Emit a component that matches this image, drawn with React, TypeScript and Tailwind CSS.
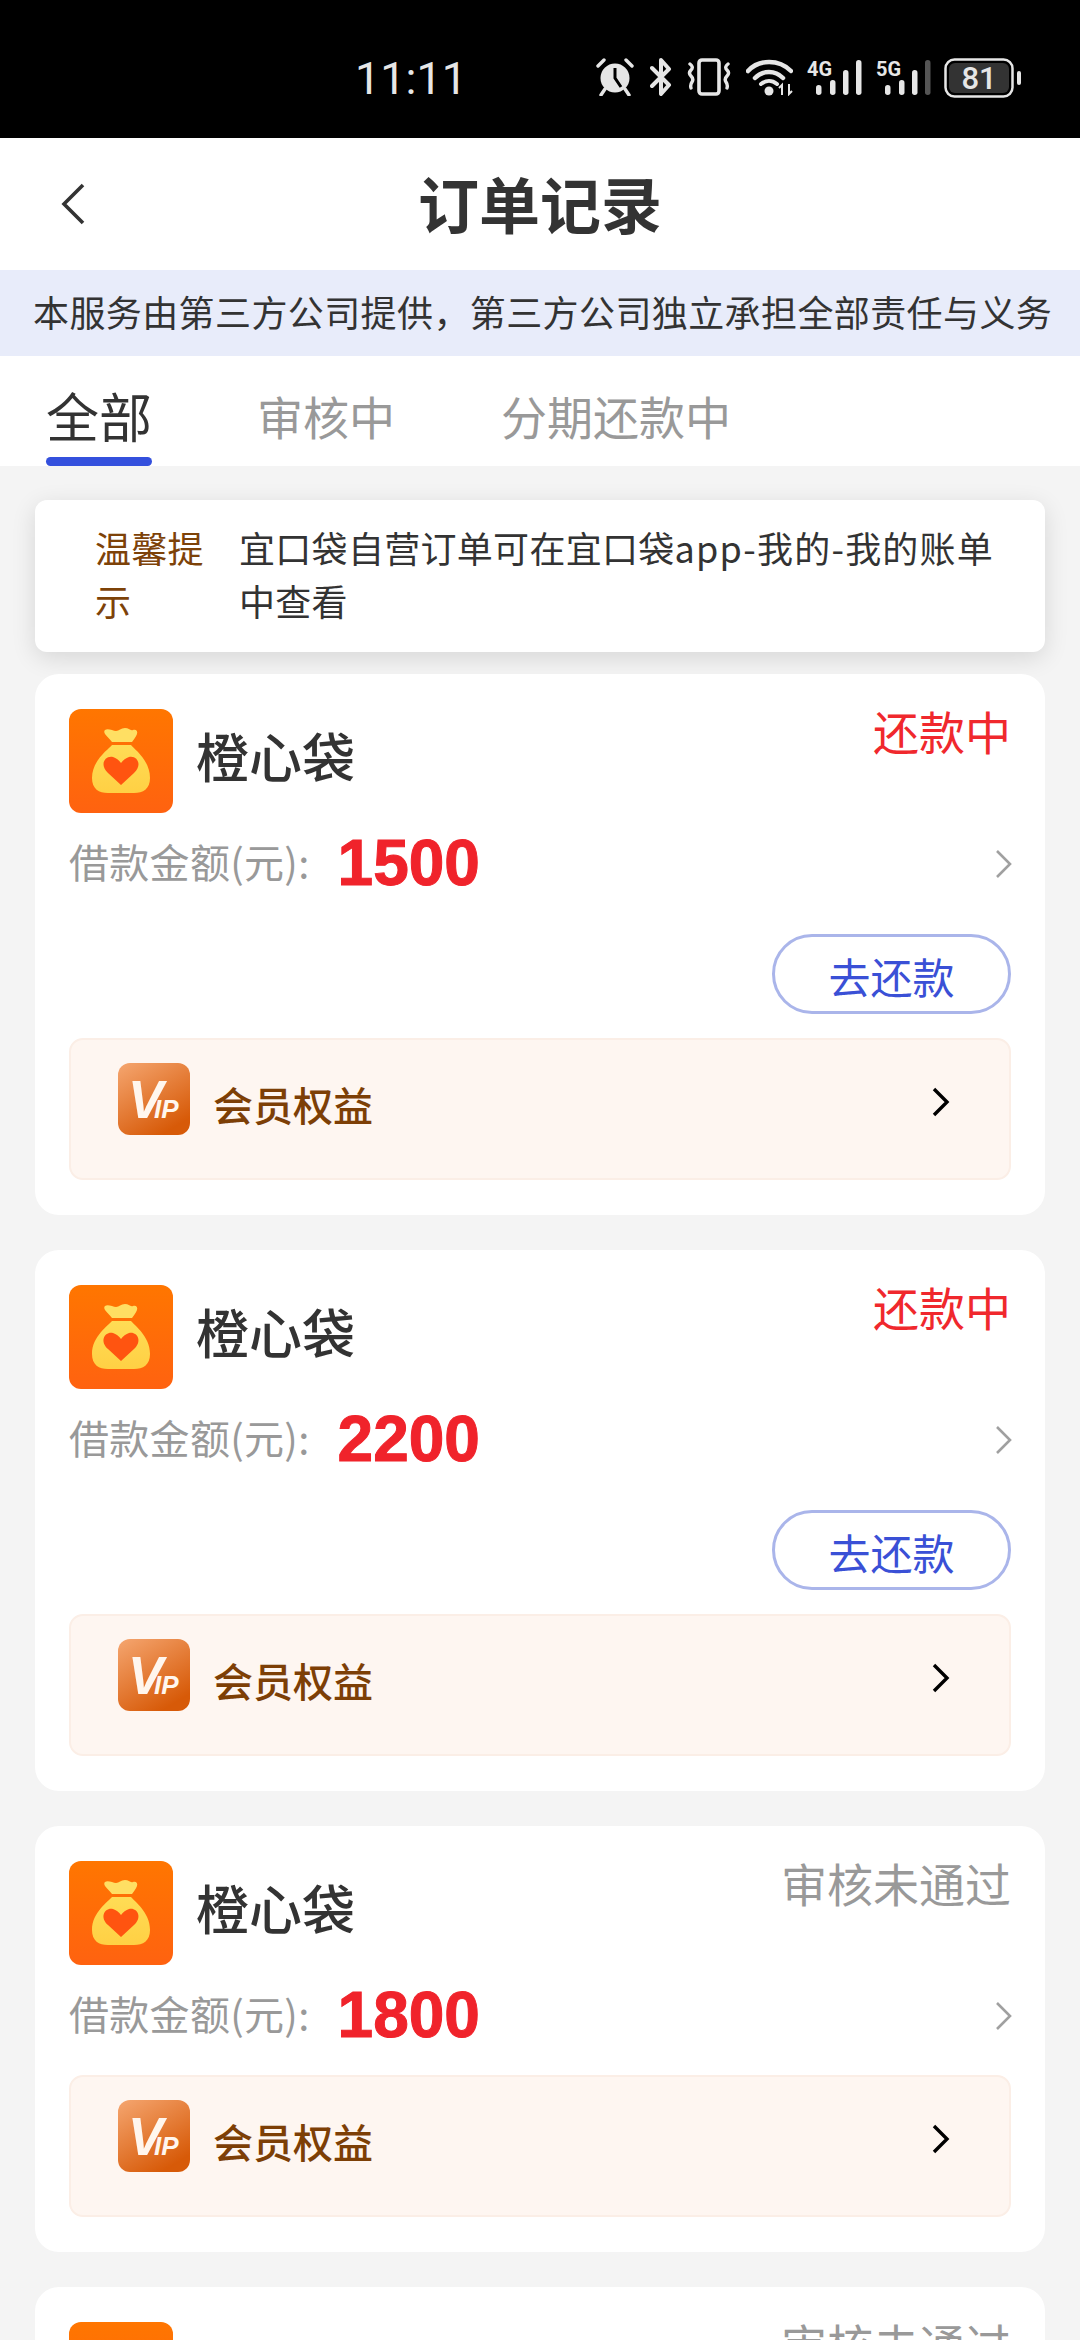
import React from "react";

function Alarm() {
  return (
    <svg width="38" height="38" viewBox="0 0 38 38" fill="none">
      <circle cx="19" cy="20" r="14.5" fill="#e6e6e6" />
      <path d="M19 10v10l6 9" stroke="#000" strokeWidth="3" />
      <path d="M2 8l6-6M36 8l-6-6M9 31l-4 6M29 31l4 6" stroke="#e6e6e6" strokeWidth="3.4" strokeLinecap="round" />
    </svg>
  );
}
function Bluetooth() {
  return (
    <svg width="22" height="38" viewBox="0 0 22 38" fill="none">
      <path d="M2 10l17 17-8 9V2l8 9L2 28" stroke="#e6e6e6" strokeWidth="4" strokeLinejoin="round" strokeLinecap="round" />
    </svg>
  );
}
function Vibrate() {
  return (
    <svg width="44" height="38" viewBox="0 0 44 38" fill="none">
      <rect x="12" y="2" width="20" height="34" rx="3" stroke="#e6e6e6" strokeWidth="3.6" />
      <path d="M3 6q4 3 1 6t0 6 1 6-1 6M41 6q-4 3-1 6t0 6-1 6 1 6" stroke="#e6e6e6" strokeWidth="3.4" strokeLinecap="round" />
    </svg>
  );
}
function Wifi() {
  return (
    <svg width="47" height="38" viewBox="0 0 47 38" fill="none">
      <path d="M2 13C13 1 33 1 45 13" stroke="#e6e6e6" strokeWidth="4.5" strokeLinecap="round" />
      <path d="M9 20c8-8 20-8 28 0" stroke="#e6e6e6" strokeWidth="4.5" strokeLinecap="round" />
      <path d="M15 26c5-4 11-4 16 0" stroke="#e6e6e6" strokeWidth="4" strokeLinecap="round" />
      <circle cx="23" cy="33" r="4.5" fill="#e6e6e6" />
      <path d="M36 37V27l-3 3M43 26v10l3-3" stroke="#e6e6e6" strokeWidth="2" />
    </svg>
  );
}
function Signal({ label, dim }: { label: string; dim?: boolean }) {
  const bars = [
    { x: 9, h: 10 },
    { x: 23, h: 15 },
    { x: 36, h: 25 },
    { x: 49, h: 35 },
  ];
  return (
    <svg width="55" height="38" viewBox="0 0 55 38">
      <text x="0" y="18" fontSize="21" fontWeight="700" fill="#e6e6e6" fontFamily="Roboto, sans-serif" textLength="25" lengthAdjust="spacingAndGlyphs">
        {label}
      </text>
      {bars.map((b, i) => (
        <rect
          key={b.x}
          x={b.x}
          y={37 - b.h}
          width="5.5"
          height={b.h}
          rx="2.7"
          fill={dim && i === 3 ? "#555555" : "#e6e6e6"}
        />
      ))}
    </svg>
  );
}
function Battery() {
  return (
    <svg width="78" height="40" viewBox="0 0 78 40">
      <rect x="1.5" y="1.5" width="67" height="37" rx="9" fill="none" stroke="#e6e6e6" strokeWidth="2.5" />
      <rect x="5" y="5" width="60" height="30" rx="6" fill="#333333" />
      <text x="35" y="31" textAnchor="middle" fontSize="31" fontWeight="500" fill="#e6e6e6" fontFamily="Roboto, sans-serif">
        81
      </text>
      <rect x="73" y="13" width="4" height="14" rx="2" fill="#e6e6e6" />
    </svg>
  );
}

function BagIcon() {
  return (
    <svg width="104" height="104" viewBox="0 0 104 104" className="shrink-0">
      <defs>
        <linearGradient id="bagBg" x1="0" y1="0" x2="0" y2="1">
          <stop offset="0" stopColor="#ff7600" />
          <stop offset="1" stopColor="#ff6210" />
        </linearGradient>
        <linearGradient id="bagBody" x1="0" y1="0" x2="0" y2="1">
          <stop offset="0" stopColor="#ffdc55" />
          <stop offset="1" stopColor="#ffd044" />
        </linearGradient>
      </defs>
      <rect width="104" height="104" rx="12" fill="url(#bagBg)" />
      <path d="M36 21c3-2 8 1 11 1s5-3 9-3 5 3 8 2 5 1 4 4c-1 3-3 5-5 8H43c-2-3-5-5-7-8-1-2-1-3 0-4z" fill="#ffdf63" />
      <path d="M43 36h19c3 4 19 15 19 33 0 11-7 15-16 15H39c-9 0-16-4-16-15 0-18 17-29 20-33z" fill="url(#bagBody)" />
      <path d="M52 76L39 64c-9-8-3-18 5-16 3 1 6 3 8 6 2-3 5-5 8-6 8-2 14 8 5 16z" fill="#ff5410" />
    </svg>
  );
}

function VipIcon() {
  return (
    <svg width="72" height="72" viewBox="0 0 72 72" className="shrink-0">
      <defs>
        <linearGradient id="vipBg" x1="0" y1="0" x2="0.6" y2="1">
          <stop offset="0" stopColor="#f5a670" />
          <stop offset="1" stopColor="#d75a08" />
        </linearGradient>
      </defs>
      <rect width="72" height="72" rx="12" fill="url(#vipBg)" />
      <text x="10" y="55" fontSize="53" fontWeight="700" fontStyle="italic" fill="#fff6ee" fontFamily="Liberation Sans, sans-serif">
        V
      </text>
      <text x="36" y="55" fontSize="26" fontWeight="700" fontStyle="italic" fill="#fff6ee" fontFamily="Liberation Sans, sans-serif">
        IP
      </text>
    </svg>
  );
}

function Chevron({ color, width }: { color: string; width: number }) {
  return (
    <svg width="20" height="30" viewBox="0 0 20 30" fill="none">
      <path d="M3 2l13 13L3 28" stroke={color} strokeWidth={width} />
    </svg>
  );
}

type Order = { amount: string; status: string; pending: boolean };

const orders: Order[] = [
  { amount: "1500", status: "还款中", pending: true },
  { amount: "2200", status: "还款中", pending: true },
  { amount: "1800", status: "审核未通过", pending: false },
  { amount: "1800", status: "审核未通过", pending: false },
];

function OrderCard({ order }: { order: Order }) {
  return (
    <div className="mx-[35px] mb-[35px] rounded-[24px] bg-white px-[34px] pt-[35px] pb-[35px]">
      <div className="flex items-start">
        <BagIcon />
        <div className="ml-[23px] mt-[18px] text-[53px] leading-[56px] font-medium text-[#333333]">橙心袋</div>
        <div
          className={
            order.pending
              ? "ml-auto mt-[-3px] text-[46px] leading-[48px] text-[#f0282d]"
              : "ml-auto mt-[-3px] text-[46px] leading-[48px] text-[#999999]"
          }
        >
          {order.status}
        </div>
      </div>
      <div className="mt-[13px] mb-[25px] flex h-[72px] items-center">
        <span className="mt-[-3px] text-[40px] leading-[50px] tracking-[0.3px] text-[#999999]">借款金额(元):</span>
        <span className="ml-[28px] mt-[2px] font-['Liberation_Sans',sans-serif] text-[64px] leading-[72px] font-bold [-webkit-text-stroke:1px_#f0232b] text-[#f0232b]">
          {order.amount}
        </span>
        <span className="ml-auto mt-[3px] mr-[-3px] flex">
          <Chevron color="#a0a0a0" width={2.6} />
        </span>
      </div>
      {order.pending && (
        <div className="mt-[36px] mb-[24px] flex justify-end">
          <div className="flex h-[80px] w-[239px] items-center justify-center rounded-full border-[3px] border-[#aab5ea] pt-[3px] text-[42px] leading-[50px] text-[#3a50d6]">
            去还款
          </div>
        </div>
      )}
      <div className="flex h-[142px] items-start rounded-[14px] border-2 border-[#fbeee6] bg-[#fef6f1] pl-[47px] pr-[58px] pt-[23px]">
        <VipIcon />
        <span className="ml-[23px] mt-[17px] text-[40px] leading-[48px] font-medium text-[#7d3f06]">会员权益</span>
        <span className="ml-auto mt-[24px] flex">
          <Chevron color="#000000" width={3.4} />
        </span>
      </div>
    </div>
  );
}

export default function App() {
  return (
    <div className="relative h-[2340px] w-[1080px] overflow-hidden bg-[#f4f4f4] font-['Noto_Sans_CJK_SC','Roboto',sans-serif]">
      <div className="flex h-[138px] items-start bg-black pl-[355px] pt-[58px] font-['Roboto',sans-serif]">
        <span className="mt-[1px] w-[241px] text-[45px] leading-[40px] text-[#e6e6e6]">11:11</span>
        <Alarm />
        <span className="ml-[16px] flex"><Bluetooth /></span>
        <span className="ml-[15px] flex"><Vibrate /></span>
        <span className="ml-[15px] flex"><Wifi /></span>
        <span className="ml-[14px] flex"><Signal label="4G" /></span>
        <span className="ml-[14px] flex"><Signal label="5G" dim /></span>
        <span className="ml-[13px] flex"><Battery /></span>
      </div>

      <div className="grid h-[132px] grid-cols-[1fr_auto_1fr] items-center bg-white">
        <svg width="26" height="42" viewBox="0 0 26 42" fill="none" className="ml-[60px]">
          <path d="M23 2L4 21l19 19" stroke="#333333" strokeWidth="3.6" />
        </svg>
        <div className="mt-[-2px] text-[61px] leading-[70px] font-bold text-[#333333]">订单记录</div>
        <div />
      </div>

      <div className="flex h-[86px] items-center whitespace-nowrap bg-[#e8ecfa] pb-[4px] pl-[33px] text-[36px] leading-[44px] tracking-[0.4px] text-[#333333]">
        本服务由第三方公司提供，第三方公司独立承担全部责任与义务
      </div>

      <div className="flex h-[110px] items-start whitespace-nowrap bg-white pl-[46px]">
        <div className="flex w-[106px] flex-col">
          <span className="mt-[28px] h-[62px] text-[53px] leading-[62px] text-[#333333]">全部</span>
          <span className="mt-[11px] h-[9px] rounded-full bg-[#3450dd]" />
        </div>
        <span className="ml-[105px] mt-[31px] text-[46px] leading-[56px] text-[#999999]">审核中</span>
        <span className="ml-[106px] mt-[31px] text-[46px] leading-[56px] text-[#999999]">分期还款中</span>
      </div>

      <div className="mx-[35px] mt-[34px] mb-[22px] flex h-[152px] items-center rounded-[12px] bg-white pb-[5px] pl-[60px] text-[36px] leading-[53px] tracking-[0.3px] shadow-[0_6px_24px_rgba(0,0,0,0.12)]">
        <div className="w-[120px] shrink-0 text-[#7d4208]">温馨提示</div>
        <div className="ml-[24px] w-[770px] text-[#333333]">
          宜口袋自营订单可在宜口袋<span className="tracking-[1.2px]">app-我的-我的账单</span>中查看
        </div>
      </div>

      {orders.map((o, i) => (
        <OrderCard key={i} order={o} />
      ))}
    </div>
  );
}
